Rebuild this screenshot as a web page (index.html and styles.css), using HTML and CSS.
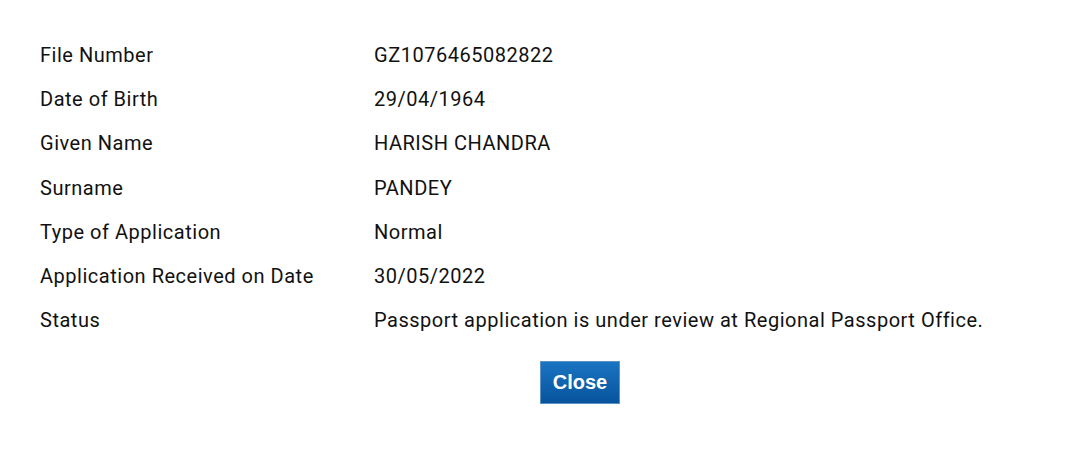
FILE: index.html
```html
<!DOCTYPE html>
<html>
<head>
<meta charset="utf-8">
<link rel="stylesheet" href="styles.css">
</head>
<body>
<div class="panel">
  <div class="rows">
    <div class="label">File Number</div><div class="value">GZ1076465082822</div>
    <div class="label">Date of Birth</div><div class="value">29/04/1964</div>
    <div class="label">Given Name</div><div class="value">HARISH CHANDRA</div>
    <div class="label">Surname</div><div class="value">PANDEY</div>
    <div class="label">Type of Application</div><div class="value">Normal</div>
    <div class="label">Application Received on Date</div><div class="value">30/05/2022</div>
    <div class="label">Status</div><div class="value">Passport application is under review at Regional Passport Office.</div>
  </div>
  <div class="actions">
    <button class="close">Close</button>
  </div>
</div>
</body>
</html>
```
FILE: styles.css
```css
html, body {
  margin: 0;
  padding: 0;
  background: #fff;
}
.panel {
  padding: 33px 0 0 40px;
  font-family: Roboto, "Liberation Sans", sans-serif;
  color: #111;
}
.rows {
  display: grid;
  grid-template-columns: 334px auto;
  grid-auto-rows: 44.2px;
  align-items: center;
  font-size: 20px;
  letter-spacing: 0.52px;
}
.actions {
  display: flex;
  justify-content: center;
  padding-left: 41px;
  margin-top: 19px;
}
.close {
  width: 80px;
  height: 43px;
  border: 1px solid #5b93c7;
  background: linear-gradient(#1b74c2, #07539c);
  color: #fff;
  font-family: "Liberation Sans", Arial, sans-serif;
  font-weight: bold;
  font-size: 20px;
  padding: 0;
}
```
